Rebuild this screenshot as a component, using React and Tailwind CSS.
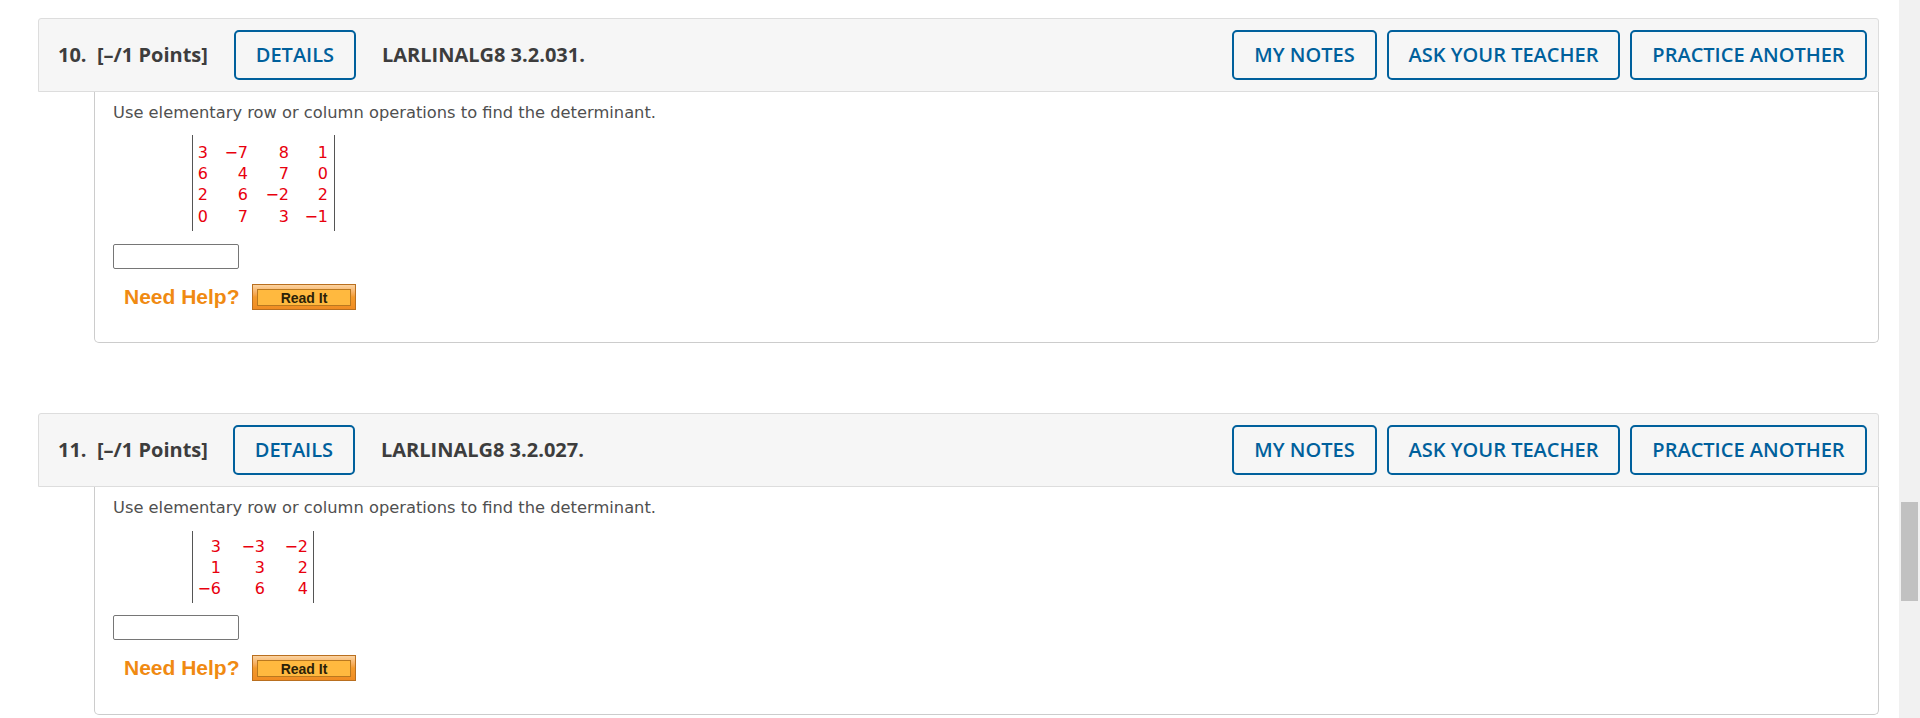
import React from "react";

const questions = [
  {
    number: "10.",
    code: "LARLINALG8 3.2.031.",
    detailsGap: "ml-[26px]",
    bodyHeight: "h-[251px]",
    columns: "grid-cols-[15px_40px_41px_39px]",
    matrixBox: "mt-[12px] h-[96px] w-[143px] pt-[7px]",
    inputGap: "mt-[13px]",
    rows: [
      ["3", "−7", "8", "1"],
      ["6", "4", "7", "0"],
      ["2", "6", "−2", "2"],
      ["0", "7", "3", "−1"],
    ],
  },
  {
    number: "11.",
    code: "LARLINALG8 3.2.027.",
    detailsGap: "ml-[25px]",
    bodyHeight: "h-[228px]",
    columns: "grid-cols-[28px_44px_43px]",
    matrixBox: "mt-[13px] h-[72px] w-[122px] pt-[5px]",
    inputGap: "mt-[12px]",
    rows: [
      ["3", "−3", "−2"],
      ["1", "3", "2"],
      ["−6", "6", "4"],
    ],
  },
];

function OutlineButton({ children, className = "" }) {
  return (
    <button
      className={`h-[50px] rounded-[5px] border-2 border-[#00609c] bg-[#f6f6f6] text-[20px] font-semibold text-[#00609c] font-['Open_Sans',sans-serif] ${className}`}
    >
      {children}
    </button>
  );
}

function Matrix({ rows, columns, matrixBox }) {
  return (
    <div className={`ml-[79px] border-x border-[#555555] ${matrixBox}`}>
      <div className={`grid ${columns} auto-rows-[21.4px] items-center justify-items-end font-['DejaVu_Sans',sans-serif] text-[16px] leading-none text-[#e8000d]`}>
        {rows.flat().map((cell, i) => (
          <span key={i}>{cell}</span>
        ))}
      </div>
    </div>
  );
}

function Question({ question }) {
  return (
    <section className="mb-[70px]">
      {/* Header bar */}
      <div className="flex h-[74px] items-center rounded-t-[3px] border border-[#dddddd] bg-[#f6f6f6] pl-[19px] pr-[11px] font-['Open_Sans',sans-serif] text-[20px] font-bold text-[#3d3d3d]">
        <span className="whitespace-pre">{question.number}  [–/1 Points]</span>
        <OutlineButton className={`w-[122px] ${question.detailsGap}`}>DETAILS</OutlineButton>
        <span className="ml-[26px]">{question.code}</span>
        <div className="ml-auto flex gap-[10px]">
          <OutlineButton className="w-[145px]">MY NOTES</OutlineButton>
          <OutlineButton className="w-[233px]">ASK YOUR TEACHER</OutlineButton>
          <OutlineButton className="w-[237px]">PRACTICE ANOTHER</OutlineButton>
        </div>
      </div>

      {/* Question body */}
      <div className={`ml-[56px] rounded-b-[5px] border-x border-b border-[#cccccc] bg-white pl-[18px] pt-[11px] ${question.bodyHeight}`}>
        <p className="font-['DejaVu_Sans',sans-serif] text-[16.3px] leading-[20px] text-[#505050]">
          Use elementary row or column operations to find the determinant.
        </p>
        <Matrix rows={question.rows} columns={question.columns} matrixBox={question.matrixBox} />
        <input
          type="text"
          aria-label="Answer"
          className={`block h-[25px] w-[126px] rounded-[2px] border border-[#767676] bg-white ${question.inputGap}`}
        />
        <div className="mt-[15px] flex items-center pl-[11px]">
          <span className="w-[128px] font-['Liberation_Sans',sans-serif] text-[21px] font-bold leading-[26px] text-[#f08a12]">
            Need Help?
          </span>
          <div className="h-[26px] w-[104px] border border-[#b96f1f] bg-gradient-to-b from-[#fbd3a0] via-[#f39a2c] to-[#f08c22] px-[4px] pb-[3px] pt-[4px]">
            <div className="flex h-full items-center justify-center border border-[#b9781f] bg-[#ffb93f] font-['Liberation_Sans',sans-serif] text-[14px] font-bold leading-none text-[#2b2208]">
              Read It
            </div>
          </div>
        </div>
      </div>
    </section>
  );
}

export default function App() {
  return (
    <div className="flex h-[718px] overflow-hidden bg-white">
      <main className="min-w-0 flex-1 pl-[38px] pr-[20px] pt-[18px]">
        {questions.map((q) => (
          <Question key={q.number} question={q} />
        ))}
      </main>
      {/* Page scrollbar */}
      <div className="w-[21px] shrink-0 bg-[#f1f1f1] px-[2px] pt-[502px]">
        <div className="h-[99px] bg-[#c1c1c1]" />
      </div>
    </div>
  );
}
